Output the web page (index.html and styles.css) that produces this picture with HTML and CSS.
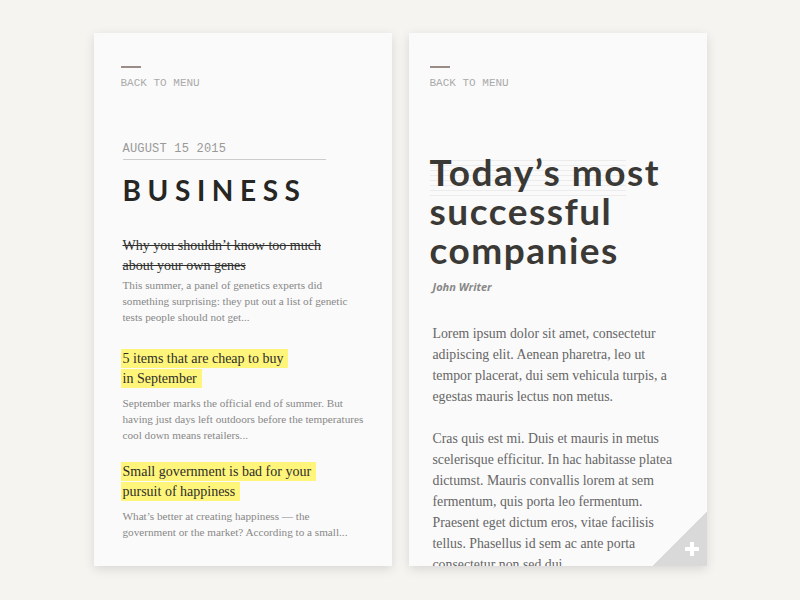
FILE: index.html
```html
<!DOCTYPE html>
<html lang="en">
<head>
  <meta charset="UTF-8" />
  <meta name="viewport" content="width=device-width, initial-scale=1.0"/>
  <title>Reader</title>
  <link rel="stylesheet" href="styles.css">
</head>
<body>

  <div class="screens">

    <!-- section list -->
    <div class="card">
      <div class="nav">
        <span class="dash"></span>
        <a class="back" href="#">Back to menu</a>
      </div>

      <div class="section">
        <div class="date">August 15 2015</div>
        <h2 class="section-title">Business</h2>

        <div class="story read">
          <h3>Why you shouldn’t know too much<br>about your own genes</h3>
          <p>This summer, a panel of genetics experts did<br>something surprising: they put out a list of genetic<br>tests people should not get...</p>
        </div>

        <div class="story marked">
          <h3><span>5 items that are cheap to buy</span><br><span>in September</span></h3>
          <p>September marks the official end of summer. But<br>having just days left outdoors before the temperatures<br>cool down means retailers...</p>
        </div>

        <div class="story marked">
          <h3><span>Small government is bad for your</span><br><span>pursuit of happiness</span></h3>
          <p>What’s better at creating happiness — the<br>government or the market? According to a small...</p>
        </div>
      </div>
    </div>

    <!-- article view -->
    <div class="card article">
      <div class="nav">
        <span class="dash"></span>
        <a class="back" href="#">Back to menu</a>
      </div>

      <h1 class="headline">Today’s most<br>successful<br>companies</h1>
      <div class="author">John Writer</div>

      <div class="body">
        <p>Lorem ipsum dolor sit amet, consectetur<br>adipiscing elit. Aenean pharetra, leo ut<br>tempor placerat, dui sem vehicula turpis, a<br>egestas mauris lectus non metus.</p>
        <p>Cras quis est mi. Duis et mauris in metus<br>scelerisque efficitur. In hac habitasse platea<br>dictumst. Mauris convallis lorem at sem<br>fermentum, quis porta leo fermentum.<br>Praesent eget dictum eros, vitae facilisis<br>tellus. Phasellus id sem ac ante porta<br>consectetur non sed dui.</p>
      </div>

      <a class="corner" href="#">
        <svg width="14" height="14" viewBox="0 0 14 14">
          <rect x="5" y="0" width="4" height="14" fill="#fff"/>
          <rect x="0" y="5" width="14" height="4" fill="#fff"/>
        </svg>
      </a>
    </div>

  </div>

</body>
</html>
```

FILE: styles.css
```css
body {
  margin: 0;
  height: 100vh;
  background: #f5f4f1;
  font-family: "Liberation Serif", serif;
}

.screens {
  display: flex;
  justify-content: center;
  gap: 17px;
  padding-top: 33px;
}

.card {
  position: relative;
  width: 298px;
  height: 533px;
  box-sizing: border-box;
  padding: 33px 27px 0;
  background: #fafafa;
  box-shadow: 0 3px 10px rgba(0,0,0,0.12);
  overflow: hidden;
}

.card.article {
  padding-left: 21px;
}

/* top nav */
.nav {
  display: flex;
  flex-direction: column;
  align-items: flex-start;
}

.dash {
  width: 20px;
  height: 2px;
  background: #9b8c88;
  margin-bottom: 8px;
}

.back {
  font-family: "Liberation Mono", monospace;
  font-size: 11px;
  line-height: 14px;
  text-transform: uppercase;
  color: #aaa;
  text-decoration: none;
}

/* section list */
.section {
  padding-left: 2px;
  margin-top: 52px;
}

.date {
  width: 203px;
  font-family: "Liberation Mono", monospace;
  font-size: 12px;
  line-height: 14px;
  letter-spacing: 0.2px;
  text-transform: uppercase;
  color: #999;
  padding-bottom: 3px;
  border-bottom: 1px solid #ccc;
}

.section-title {
  margin: 13px 0 0;
  font-family: Lato, sans-serif;
  font-weight: 700;
  font-size: 28px;
  line-height: 34px;
  letter-spacing: 6.6px;
  text-transform: uppercase;
  color: #262624;
}

.story {
  margin-top: 24px;
}

.story.read {
  margin-top: 29px;
}

.story.marked + .story.marked {
  margin-top: 19px;
}

.story h3 {
  margin: 0 0 1px;
  font-weight: normal;
  font-size: 14px;
  line-height: 20px;
  color: #2e2e2c;
  white-space: nowrap;
}

.story.read h3 {
  text-decoration: line-through;
}

.story.marked h3 {
  margin-bottom: 6px;
}

.story.marked h3 span {
  background: #fff57a;
  padding: 2px 5px 2px 2px;
  margin-left: -2px;
}

.story p {
  margin: 0;
  font-size: 11.2px;
  line-height: 16px;
  color: #888;
  white-space: nowrap;
}

/* article view */
.headline {
  margin: 62px 0 0;
  font-family: Lato, sans-serif;
  font-weight: 700;
  font-size: 37px;
  line-height: 39px;
  letter-spacing: 1.5px;
  color: #3a3935;
  background: repeating-linear-gradient(to bottom, #ececec 0 1px, transparent 1px 5px) 0 8px / 196px 36px no-repeat;
}

.author {
  margin: 11px 0 0 3px;
  font-family: "Open Sans", sans-serif;
  font-style: italic;
  font-weight: 700;
  font-size: 11px;
  line-height: 14px;
  color: #888;
}

.body {
  margin: 29px 0 0 3px;
}

.body p {
  margin: 0 0 21px;
  font-size: 13.8px;
  line-height: 21px;
  color: #666;
  white-space: nowrap;
}

.corner {
  position: absolute;
  right: 0;
  bottom: 0;
  width: 54px;
  height: 54px;
  background: linear-gradient(to bottom right, transparent 50%, #d9d9d9 50%);
}

.corner svg {
  position: absolute;
  right: 8px;
  bottom: 10px;
}
```
